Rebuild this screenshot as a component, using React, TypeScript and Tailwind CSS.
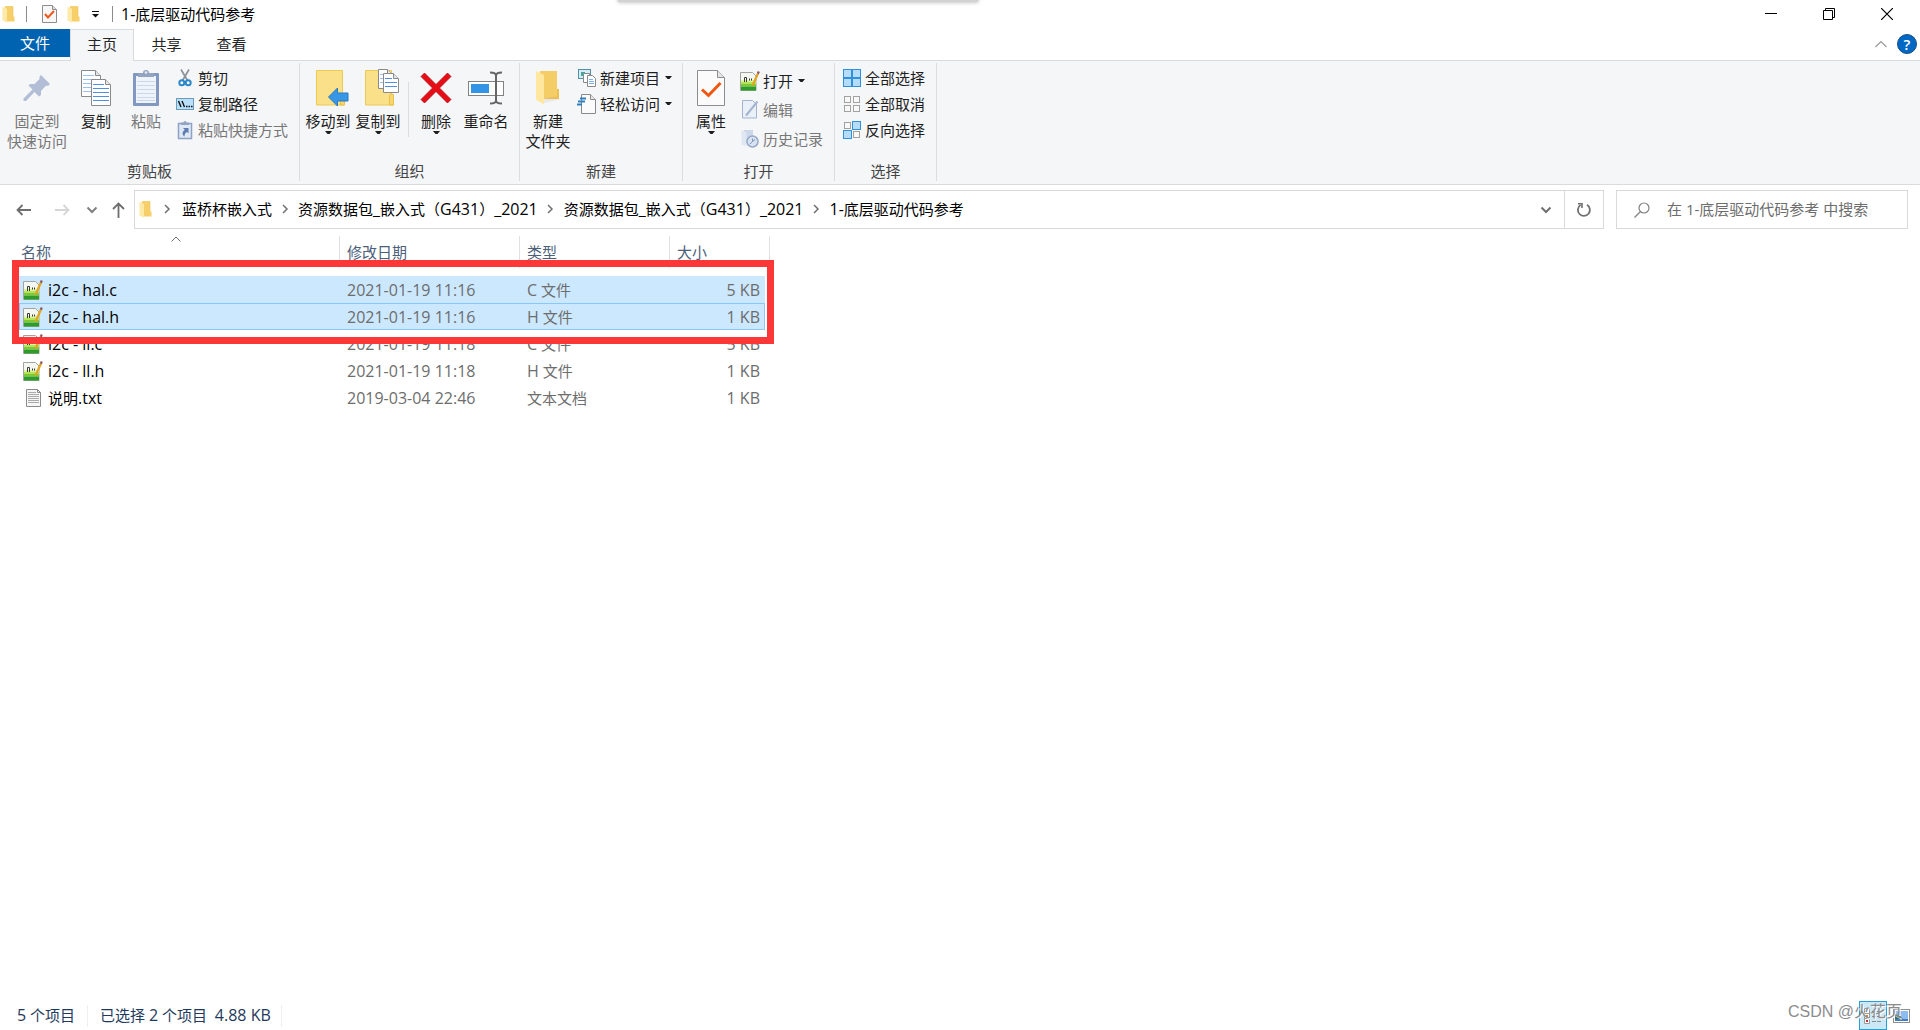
import React from "react";

type P = { children?: React.ReactNode };

/* Latin runs are set one pixel larger than the Chinese text around them. */
function Mixed({ text }: { text: string }) {
  return (
    <>
      {text.split(/([!-~]+(?: [!-~]+)*)/).map((part, i) =>
        i % 2 === 1 ? (
          <span key={i} className="text-[16px]">{part}</span>
        ) : (
          <React.Fragment key={i}>{part}</React.Fragment>
        ),
      )}
    </>
  );
}

function Svg({ w, h, children }: { w: number; h: number; children: React.ReactNode }) {
  return (
    <svg width={w} height={h} viewBox={`0 0 ${w} ${h}`} fill="none" className="block shrink-0" aria-hidden="true">
      {children}
    </svg>
  );
}

const FolderSmall = () => (
  <Svg w={14} h={17}>
    <path d="M3 0.5h8v10h1.5v5H3z" fill="#f7cf68" />
    <path d="M0.5 0.5L5 3v13.5L0.5 14.5z" fill="#ffe9a6" />
    <path d="M3 0.5h8v10" stroke="#eec45a" strokeWidth="0.6" />
  </Svg>
);

const CheckDoc = () => (
  <Svg w={15} h={18}>
    <path d="M0.5 0.5h10l4 4v13H0.5z" fill="#f7f7f7" stroke="#8e8e8e" />
    <path d="M10.5 0.5v4h4" fill="#ddd" stroke="#8e8e8e" />
    <path d="M3 9l3 3.5 6-6.5" stroke="#f0591e" strokeWidth="2" />
  </Svg>
);

const Caret = () => (
  <Svg w={7} h={4}>
    <path d="M0 0h7L4.5 3h-2z" fill="#1e1e1e" />
  </Svg>
);

const PinIcon = () => (
  <Svg w={28} h={28}>
    <path d="M18 1l9 9-1.500 1.500-3 0.500-4.500 5v4l-2 1.500-4.500-4.500L3 27H0.500v-2.500L9.500 15.500 5.500 11.500 7 10h4.500l5-5L16.500 2.500z" fill="#b1bed5" />
  </Svg>
);

function Page({ x, y, w, h, line = "#4f90e6" }: { x: number; y: number; w: number; h: number; line?: string }) {
  const rows = Array.from({ length: Math.floor((h - 6) / 4) }, (_, i) => y + 6 + i * 4);
  return (
    <g>
      <path d={`M${x + 0.5} ${y + 0.5}h${w - 6}l5 5v${h - 6}h${1 - w}z`} fill="#fff" stroke="#8a8a8a" />
      <path d={`M${x + w - 5.5} ${y + 0.5}v5h5`} fill="#e6e6e6" stroke="#8a8a8a" />
      {rows.map((r, i) => (
        <path key={r} d={`M${x + 2} ${r - 0.5}h${i === 0 ? w - 9 : w - 4}`} stroke={line} />
      ))}
    </g>
  );
}

const CopyIcon = () => (
  <Svg w={30} h={38}>
    <Page x={0} y={1} w={20} h={27} line="#9cc0ee" />
    <Page x={10} y={10} w={20} h={27} />
  </Svg>
);

const PasteIcon = () => (
  <Svg w={28} h={38}>
    <rect x="1" y="4" width="26" height="33" rx="1" fill="#8298c0" />
    <path d="M4 7h20v27H4z" fill="#eff4fb" />
    <path d="M5 12.500h18M5 16.500h18M5 20.500h18M5 24.500h18M5 28.500h18M5 31.500h18" stroke="#cbd7ea" />
    <path d="M6 4h5a3 3 0 0 1 6 0h5v4H6z" fill="#94a4c0" />
    <circle cx="14" cy="3.500" r="1.300" fill="#e4ebf6" />
  </Svg>
);

const CutIcon = () => (
  <Svg w={18} h={20}>
    <path d="M5 1.500l6.500 11M13 1.500L6.500 12.500" stroke="#8b9299" strokeWidth="1.700" />
    <circle cx="5.800" cy="14.800" r="2.500" stroke="#2b88c9" strokeWidth="2" />
    <circle cx="12.200" cy="14.800" r="2.500" stroke="#2b88c9" strokeWidth="2" />
  </Svg>
);

const PathIcon = () => (
  <Svg w={18} h={12}>
    <rect x="0.500" y="0.500" width="17" height="11" fill="#b9dffa" stroke="#6d9cba" />
    <path d="M2.500 3l2.500 6M6 3l2.500 6" stroke="#111" strokeWidth="1.400" />
    <path d="M10 8.500h1.500M12.500 8.500H14M15 8.500h1.500" stroke="#111" strokeWidth="1.400" />
  </Svg>
);

const ShortcutIcon = () => (
  <Svg w={18} h={20}>
    <rect x="2.500" y="3.500" width="13" height="15" fill="#dfe8f5" stroke="#8ea2c6" strokeWidth="1.500" />
    <path d="M5 2.500h2.500a1.500 1.500 0 0 1 3 0H13V5H5z" fill="#94a4c0" />
    <path d="M7 8h5.500v5.500L11 12c-2 1-2.500 2.500-2.500 4.500C5.500 14.500 6.500 11.500 8.800 9.800z" fill="#5e7cb0" />
  </Svg>
);

const FolderBig = () => (
  <g>
    <path d="M0.500 1.500h26v24h2v10.500H0.500z" fill="#fbe08a" stroke="#ecc94f" />
    <path d="M24.500 36v-9.500c0-2 4-2 4 0V36z" fill="#f6d66f" stroke="#e8c146" />
  </g>
);

const MoveIcon = () => (
  <Svg w={33} h={38}>
    <FolderBig />
    <path d="M12.500 28l9-9v5h10.500v8H21.500v5z" fill="#3797e6" stroke="#2a79c0" />
  </Svg>
);

const CopyToIcon = () => (
  <Svg w={34} h={38}>
    <FolderBig />
    <Page x={13} y={0} w={15} h={20} line="#9cc0ee" />
    <Page x={18} y={4} w={16} h={20} />
  </Svg>
);

const DeleteIcon = () => (
  <Svg w={32} h={32}>
    <path d="M1 4.500L4.500 1 16 12.500 27.500 1 31 4.500 19.500 16 31 27.500 27.500 31 16 19.500 4.500 31 1 27.500 12.500 16z" fill="#e60d17" stroke="#b01018" strokeWidth="0.800" />
  </Svg>
);

const RenameIcon = () => (
  <Svg w={36} h={34}>
    <rect x="0.500" y="10.500" width="35" height="14" fill="#fff" stroke="#828282" />
    <rect x="3" y="13" width="18" height="9" fill="#3393e4" />
    <path d="M28 3v28M22 1.500c3 0 6 0.500 6 3 0-2.500 3-3 6-3M22 32.500c3 0 6-0.500 6-3 0 2.500 3 3 6 3" stroke="#666" strokeWidth="2" />
  </Svg>
);

const NewFolderIcon = () => (
  <Svg w={26} h={36}>
    <path d="M5 1h17v18h2v10H5z" fill="#f5cd66" />
    <path d="M22 19h2v10H8l14-3z" fill="#eebf56" />
    <path d="M1 1l8 4v30l-2-2-6-3z" fill="#ffe7a0" />
    <path d="M9 29h17l-17 4z" fill="#d9d9d9" opacity="0.500" />
  </Svg>
);

const NewItemIcon = () => (
  <Svg w={18} h={20}>
    <rect x="0.500" y="1.500" width="12" height="9" fill="#d6ecf7" stroke="#4f8fa8" />
    <rect x="3" y="4" width="4" height="4" fill="#3fa796" />
    <path d="M5.500 5.500h6v9h-6z" fill="#fff" stroke="#8a8a8a" />
    <path d="M9.500 7.500h5l3 3v8h-8z" fill="#fff" stroke="#8a8a8a" />
    <path d="M11 11.500h4M11 13.500h5M11 15.500h5" stroke="#7fb0ee" />
  </Svg>
);

const EasyAccessIcon = () => (
  <Svg w={20} h={20}>
    <path d="M4.500 0.500h9l5 5v14h-14z" fill="#fbfbfb" stroke="#8a8a8a" />
    <path d="M13.500 0.500v5h5" fill="#e6e6e6" stroke="#8a8a8a" />
    <path d="M3 4.500h6M1 7.500h7M0 10.500h5" stroke="#2f7fc0" strokeWidth="1.800" />
  </Svg>
);

const PropsIcon = () => (
  <Svg w={28} h={36}>
    <path d="M0.500 0.500h20l7 7v28H0.500z" fill="#fbfbfb" stroke="#8e8e8e" />
    <path d="M20.500 0.500v7h7" fill="#e4e4e4" stroke="#8e8e8e" />
    <path d="M5 19.500l6.500 6L23.500 13" stroke="#f0560f" strokeWidth="3" />
  </Svg>
);

const NoteIcon = () => (
  <Svg w={20} h={20}>
    <path d="M0.500 1.500h12l3.500 3.500v14.500H0.500z" fill="#f4f7f0" stroke="#a3a3a3" />
    <path d="M1 9h15v2H1z" fill="#dcf3a0" />
    <path d="M1 11h15v2H1z" fill="#b4e35c" />
    <path d="M1 13h15v2.500H1z" fill="#7fca34" />
    <path d="M1 15.500h15v4H1z" fill="#2d9c2a" />
    <path d="M4.500 11V6.500M6.500 11V6.500M4.500 6.500h2M9.500 7.500v2M11.500 7.500v2" stroke="#3a3a3a" />
    <path d="M18 2.500L12.500 14.500" stroke="#e2a51d" strokeWidth="2.200" />
    <path d="M18.800 0.500l-1 2.200" stroke="#8a5466" strokeWidth="2.200" />
  </Svg>
);

const EditIcon = () => (
  <Svg w={18} h={19}>
    <path d="M1.500 0.500h10l4 4v13.500h-14z" fill="#eaf0f8" stroke="#a3b3d0" />
    <path d="M16.500 1.500L5 15.500" stroke="#a3b3d0" strokeWidth="2" />
  </Svg>
);

const HistoryIcon = () => (
  <Svg w={18} h={19}>
    <path d="M3 1h9v13H3z" fill="#ccd8ea" />
    <path d="M0.500 1l5 2.500v14l-5-2z" fill="#dfe7f3" />
    <circle cx="11.500" cy="12.500" r="5.500" fill="#d8e2f0" stroke="#97a9c8" strokeWidth="1.500" />
    <path d="M11.500 9.500v3l2.500-2M11.500 12.500L9 15" stroke="#7e94bb" />
  </Svg>
);

function Cells({ on }: { on: boolean[] }) {
  const spots = [[0, 0], [9, 0], [0, 9], [9, 9]];
  const order = spots.map((s, i) => ({ s, lit: on[i] })).sort((a, b) => Number(a.lit) - Number(b.lit));
  return (
    <Svg w={18} h={18}>
      {order.map(({ s: [x, y], lit }) =>
        lit ? (
          <rect key={`${x}${y}`} x={x + 0.5} y={y + 0.5} width="8" height="8" fill="#b5dcfa" stroke="#2f91dd" />
        ) : (
          <rect key={`${x}${y}`} x={x + 1.5} y={y + 1.5} width="6" height="6" fill="#f8f8f8" stroke="#a2a2a2" />
        ),
      )}
    </Svg>
  );
}

const TextFileIcon = () => (
  <Svg w={20} h={20}>
    <path d="M3.500 1.500h11l3 3v14h-14z" fill="#f6f6f6" stroke="#8a8a8a" />
    <path d="M14.500 1.500v3h3" stroke="#8a8a8a" />
    <path d="M5 4.500h8M5 6.500h11M5 8.500h11M5 10.500h11M5 12.500h11M5 14.500h11" stroke="#ababab" />
  </Svg>
);

function Chevron({ dir, color = "#707070", size = "m" }: { dir: "right" | "down" | "up"; color?: string; size?: "m" | "l" }) {
  if (dir === "right") return <Svg w={7} h={10}><path d="M1 1l4 4-4 4" stroke={color} strokeWidth="1.500" /></Svg>;
  if (dir === "down") return <Svg w={12} h={8}><path d="M1.500 1.500L6 6l4.500-4.500" stroke={color} strokeWidth="2" /></Svg>;
  return size === "l" ? (
    <Svg w={12} h={8}><path d="M0.500 7L6 1.500 11.500 7" stroke={color} strokeWidth="1.200" /></Svg>
  ) : (
    <Svg w={10} h={6}><path d="M0.500 5.500L5 1l4.500 4.500" stroke={color} /></Svg>
  );
}

function Group({ label, children, pad = "pl-1" }: P & { label: string; pad?: string }) {
  return (
    <section aria-label={label} className="flex flex-col justify-between border-r border-[#dcdddf]">
      <div className={`flex gap-0.5 ${pad}`}>{children}</div>
      <div className="text-center leading-5 text-[#444]">{label}</div>
    </section>
  );
}

function Big({ icon, lines, caret, disabled, wide, shifted }: { icon: React.ReactNode; lines: string[]; caret?: boolean; disabled?: boolean; wide?: boolean; shifted?: boolean }) {
  return (
    <button
      type="button"
      disabled={disabled}
      className={`flex flex-col items-center pt-1.5 leading-5 whitespace-nowrap ${wide ? "w-[66px]" : "w-12"} ${disabled ? "text-[#777]" : "text-[#1e1e1e]"}`}
    >
      <span className={`mb-1 flex h-[38px] items-center ${shifted ? "pl-2" : ""}`}>{icon}</span>
      {lines.map((l) => (
        <span key={l}>{l}</span>
      ))}
      {caret && <Caret />}
    </button>
  );
}

function Small({ icon, text, caret, disabled, tall }: { icon: React.ReactNode; text: string; caret?: boolean; disabled?: boolean; tall?: boolean }) {
  return (
    <button
      type="button"
      disabled={disabled}
      className={`flex items-center gap-1 whitespace-nowrap ${tall ? "h-[29px]" : "h-[26px]"} ${disabled ? "text-[#777]" : "text-[#1e1e1e]"}`}
    >
      <span className="flex w-[18px] justify-center">{icon}</span>
      {text}
      {caret && <span className="ml-px"><Caret /></span>}
    </button>
  );
}

const crumbs = ["蓝桥杯嵌入式", "资源数据包_嵌入式（G431）_2021", "资源数据包_嵌入式（G431）_2021", "1-底层驱动代码参考"];

const files = [
  { name: "i2c - hal.c", date: "2021-01-19 11:16", type: "C 文件", size: "5 KB", state: "bg-[#cce8ff]" },
  { name: "i2c - hal.h", date: "2021-01-19 11:16", type: "H 文件", size: "1 KB", state: "bg-[#cce8ff] outline-1 -outline-offset-1 outline-[#88c8fb]" },
  { name: "i2c - ll.c", date: "2021-01-19 11:18", type: "C 文件", size: "5 KB", state: "" },
  { name: "i2c - ll.h", date: "2021-01-19 11:18", type: "H 文件", size: "1 KB", state: "" },
  { name: "说明.txt", date: "2019-03-04 22:46", type: "文本文档", size: "1 KB", state: "" },
];

const columns = [
  { label: "名称", width: "w-[321px]", pad: "pl-0.5" },
  { label: "修改日期", width: "w-[180px]", pad: "pl-[7px]" },
  { label: "类型", width: "w-[150px]", pad: "pl-[7px]" },
  { label: "大小", width: "w-[95px]", pad: "pl-[7px]" },
];

export default function App() {
  return (
    <div className="relative flex min-h-screen flex-col overflow-hidden bg-white font-['Open_Sans','Noto_Sans_CJK_SC',sans-serif] text-[15px] leading-5 text-black">
      <div className="absolute -top-2 left-[618px] h-2.5 w-[360px] bg-[#d2d2d2] shadow-[0_0_4px_#aaa]" />

      <header className="flex h-[29px] items-center justify-between pb-px">
        <div className="flex items-center pl-0.5">
          <FolderSmall />
          <span className="mr-[15px] ml-2.5 h-4 w-px bg-[#8c8c8c]" />
          <button type="button" aria-label="属性"><CheckDoc /></button>
          <button type="button" aria-label="新建文件夹" className="ml-2.5"><FolderSmall /></button>
          <button type="button" aria-label="自定义快速访问工具栏" className="ml-[11px]">
            <Svg w={7} h={7}><path d="M0 0.500h7" stroke="#111" /><path d="M0 3h7L3.500 6.500z" fill="#111" /></Svg>
          </button>
          <span className="mr-2 ml-[13px] h-4 w-px bg-[#8c8c8c]" />
          <h1><Mixed text="1-底层驱动代码参考" /></h1>
        </div>
        <div className="flex self-stretch pr-1">
          <button type="button" aria-label="最小化" className="flex w-[58px] items-center justify-center">
            <Svg w={12} h={12}><path d="M0 5.500h12" stroke="#000" /></Svg>
          </button>
          <button type="button" aria-label="还原" className="flex w-[58px] items-center justify-center">
            <Svg w={12} h={12}><path d="M0.500 2.500h9v9h-9zM2.500 2.500v-2h9v9h-2" stroke="#000" /></Svg>
          </button>
          <button type="button" aria-label="关闭" className="flex w-[58px] items-center justify-center">
            <Svg w={12} h={12}><path d="M0 0l12 12M12 0L0 12" stroke="#000" strokeWidth="1.200" /></Svg>
          </button>
        </div>
      </header>

      <nav className="flex h-8 border-b border-[#dadbdc] text-[#262626]">
        <button type="button" className="mb-[3px] w-[70px] bg-[#0063b1] text-white">文件</button>
        <button type="button" className="-mb-px w-16 border-x border-t border-[#dadbdc] bg-[#f5f6f8] pb-[3px]">主页</button>
        <button type="button" className="w-[65px] pb-0.5">共享</button>
        <button type="button" className="w-[65px] pb-0.5">查看</button>
        <div className="ml-auto flex items-center gap-2.5 pr-[3px] pb-0.5">
          <button type="button" aria-label="最小化功能区"><Chevron dir="up" size="l" color="#9a9a9a" /></button>
          <button type="button" aria-label="帮助" className="h-5 w-5 rounded-full border border-[#1b4f83] bg-[#0067c5] text-[15px] leading-[18px] font-semibold text-white">?</button>
        </div>
      </nav>

      <div className="flex h-[124px] border-b border-[#dadbdc] bg-[#f5f6f8] pt-0.5 pb-[3px]">
        <Group label="剪贴板" pad="pl-1 pr-[11px]">
          <Big wide disabled icon={<PinIcon />} lines={["固定到", "快速访问"]} />
          <Big icon={<CopyIcon />} lines={["复制"]} />
          <Big disabled icon={<PasteIcon />} lines={["粘贴"]} />
          <div className="ml-1 flex flex-col pt-0.5">
            <Small icon={<CutIcon />} text="剪切" />
            <Small icon={<PathIcon />} text="复制路径" />
            <Small disabled icon={<ShortcutIcon />} text="粘贴快捷方式" />
          </div>
        </Group>
        <Group label="组织" pad="pl-1 pr-[9px]">
          <Big caret shifted icon={<MoveIcon />} lines={["移动到"]} />
          <Big caret shifted icon={<CopyToIcon />} lines={["复制到"]} />
          <span className="mr-px ml-1 mt-[19px] h-[55px] w-px bg-[#dcdddf]" />
          <Big caret icon={<DeleteIcon />} lines={["删除"]} />
          <Big icon={<RenameIcon />} lines={["重命名"]} />
        </Group>
        <Group label="新建" pad="pl-1 pr-2.5">
          <Big icon={<NewFolderIcon />} lines={["新建", "文件夹"]} />
          <div className="ml-1 flex flex-col pt-0.5">
            <Small caret icon={<NewItemIcon />} text="新建项目" />
            <Small caret icon={<EasyAccessIcon />} text="轻松访问" />
          </div>
        </Group>
        <Group label="打开" pad="pl-1 pr-[11px]">
          <Big caret icon={<PropsIcon />} lines={["属性"]} />
          <div className="ml-1 flex flex-col pt-[3px]">
            <Small tall caret icon={<NoteIcon />} text="打开" />
            <Small tall disabled icon={<EditIcon />} text="编辑" />
            <Small tall disabled icon={<HistoryIcon />} text="历史记录" />
          </div>
        </Group>
        <Group label="选择" pad="pl-2 pr-[11px]">
          <div className="flex flex-col pt-0.5">
            <Small icon={<Cells on={[true, true, true, true]} />} text="全部选择" />
            <Small icon={<Cells on={[false, false, false, false]} />} text="全部取消" />
            <Small icon={<Cells on={[false, true, true, false]} />} text="反向选择" />
          </div>
        </Group>
      </div>

      <div className="flex h-[51px] items-center pb-0.5 pr-3">
        <div className="flex w-[134px] shrink-0 items-center pl-4">
          <button type="button" aria-label="后退">
            <Svg w={15} h={12}><path d="M6.500 1L1.500 6l5 5M1.500 6H15" stroke="#6e6e6e" strokeWidth="1.800" /></Svg>
          </button>
          <button type="button" aria-label="前进" disabled className="ml-6">
            <Svg w={15} h={12}><path d="M8.500 1l5 5-5 5M13.500 6H0" stroke="#d6d6d6" strokeWidth="1.800" /></Svg>
          </button>
          <button type="button" aria-label="最近浏览的位置" className="ml-4"><Chevron dir="down" color="#808080" /></button>
          <button type="button" aria-label="上移" className="ml-3.5">
            <Svg w={13} h={16}><path d="M1 7l5.500-5.500L12 7M6.500 1.500V16" stroke="#6e6e6e" strokeWidth="1.800" /></Svg>
          </button>
        </div>
        <div className="flex h-[39px] grow items-center border border-[#d9d9d9]">
          <span className="pl-1"><FolderSmall /></span>
          <ol className="flex grow items-center pb-px">
            {crumbs.map((c, i) => (
              <li key={i} className="flex items-center whitespace-nowrap">
                <span className={`flex justify-center ${i === 0 ? "w-[29px]" : "w-[26px]"}`}><Chevron dir="right" /></span>
                <button type="button"><Mixed text={c} /></button>
              </li>
            ))}
          </ol>
          <button type="button" aria-label="上一个位置" className="flex w-9 justify-center"><Chevron dir="down" /></button>
          <button type="button" aria-label="刷新" className="flex w-[39px] justify-center self-stretch border-l border-[#d9d9d9]">
            <span className="self-center">
              <Svg w={16} h={16}>
                <path d="M11 2.800A6 6 0 1 1 4.500 3" stroke="#707070" strokeWidth="1.800" />
                <path d="M2 1.800h4v4.200" stroke="#707070" strokeWidth="1.600" />
              </Svg>
            </span>
          </button>
        </div>
        <label className="ml-3 flex h-[39px] w-[292px] shrink-0 items-center gap-[17px] border border-[#d9d9d9] pl-[17px]">
          <Svg w={16} h={16}>
            <circle cx="10" cy="6" r="5" stroke="#808080" strokeWidth="1.200" />
            <path d="M6.500 9.500L0.500 15.500" stroke="#808080" strokeWidth="1.200" />
          </Svg>
          <input
            type="search"
            aria-label="搜索"
            placeholder="在 1-底层驱动代码参考 中搜索"
            className="min-w-0 grow bg-transparent pb-px outline-none placeholder:text-[#6d6d6d]"
          />
        </label>
      </div>

      <main className="relative ml-[19px] w-[746px]">
        <table className="table-fixed border-collapse text-left">
          <thead>
            <tr>
              {columns.map((c, i) => (
                <th key={c.label} className={`relative p-0 pb-2 font-normal text-[#4c607a] ${c.width}`}>
                  <div className={`flex h-8 items-center ${c.pad} ${i < 3 ? "border-r border-[#e1e1e1]" : ""}`}>{c.label}</div>
                  {i === 0 && <span className="absolute top-0 left-[152px]"><Chevron dir="up" /></span>}
                  {i === 3 && <span className="absolute top-0 -right-[5px] h-8 w-px bg-[#e1e1e1]" />}
                </th>
              ))}
            </tr>
          </thead>
          <tbody>
            {files.map((f) => (
              <tr key={f.name} className={`h-[27px] text-[#6d6d6d] ${f.state}`}>
                <td className="p-0 pl-1 text-black">
                  <div className="flex items-center gap-[5px]">
                    {f.name.endsWith("txt") ? <TextFileIcon /> : <NoteIcon />}
                    <span><Mixed text={f.name} /></span>
                  </div>
                </td>
                <td className="p-0 pl-[7px]"><Mixed text={f.date} /></td>
                <td className="p-0 pl-[7px]"><Mixed text={f.type} /></td>
                <td className="p-0 pr-[5px] text-right"><Mixed text={f.size} /></td>
              </tr>
            ))}
          </tbody>
        </table>
        <div className="pointer-events-none absolute top-6 -right-[9px] -left-[7px] h-[84px] border-[7px] border-[#fc3737]" />
      </main>

      <footer className="mt-auto flex h-[29px] items-center text-[#1e395b]">
        <span className="border-r border-[#f0f0f0] pr-3 pb-0.5 pl-[17px]"><Mixed text="5 个项目" /></span>
        <span className="border-r border-[#f0f0f0] pr-2.5 pb-0.5 pl-3 whitespace-pre"><Mixed text={"已选择 2 个项目  4.88 KB"} /></span>
        <div className="ml-auto flex items-center gap-1.5 self-stretch pr-2.5">
          <button type="button" aria-label="详细信息" className="flex w-7 items-center justify-center self-stretch border border-[#26a0da] bg-[#cbe8f6]">
            <Svg w={18} h={16}>
              <path d="M0.500 0.500h5v15h-5zM0.500 5.500h5M0.500 10.500h5" fill="#fff" stroke="#9a9a9a" />
              <path d="M2 2h2v2H2z" fill="#3b7fd0" /><path d="M2 7h2v2H2z" fill="#d08a30" /><path d="M2 12h2v2H2z" fill="#c03030" />
              <path d="M8 3.500h4M13 3.500h4M8 8.500h4M13 8.500h4M8 13.500h4M13 13.500h4" stroke="#8a8a8a" />
            </Svg>
          </button>
          <button type="button" aria-label="大缩略图">
            <Svg w={17} h={14}>
              <rect x="0.500" y="0.500" width="16" height="13" fill="#fff" stroke="#8f8f8f" />
              <path d="M2 2h13v10H2z" fill="#8dbcf0" />
              <path d="M2 5l5 2 3 3H2z" fill="#3c6b50" /><path d="M2 10h13v2H2z" fill="#3f7fc8" />
            </Svg>
          </button>
        </div>
      </footer>
      <div className="pointer-events-none absolute right-[18px] bottom-2 font-['Liberation_Sans','Noto_Sans_CJK_SC',sans-serif] text-[16px] whitespace-nowrap text-[#8c8c8c] [text-shadow:1px_1px_0_#fff]">CSDN @火花页</div>
    </div>
  );
}
